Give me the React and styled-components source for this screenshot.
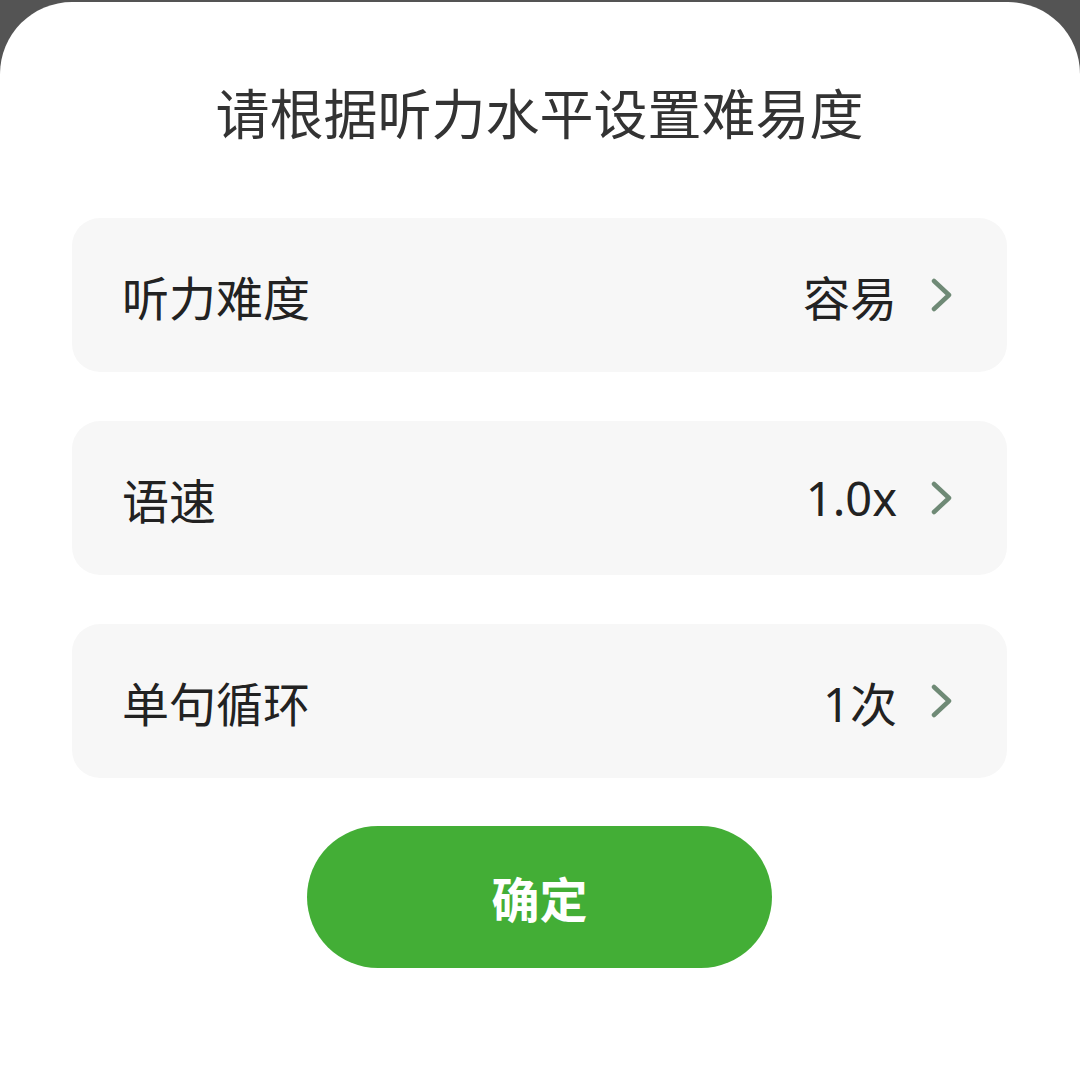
import React from "react";
import styled, { createGlobalStyle } from "styled-components";

const GlobalStyle = createGlobalStyle`
  html, body { margin: 0; padding: 0; background: #545454; }
  body { font-family: "Noto Sans", "Noto Sans CJK SC", sans-serif; }
  * { box-sizing: border-box; }
`;

const Page = styled.div`
  width: 1080px;
  height: 1075px;
  padding-top: 2px;
  background: #545454;
  overflow: hidden;
`;

const Sheet = styled.div`
  height: 1073px;
  background: #ffffff;
  border-radius: 72px 72px 0 0;
  padding: 80px 73px 0 72px;
  display: flex;
  flex-direction: column;
`;

const Title = styled.h1`
  margin: 0;
  font-family: "Noto Sans CJK SC", sans-serif;
  font-weight: 400;
  font-size: 54px;
  line-height: 60px;
  color: #333333;
  text-align: center;
`;

const List = styled.div`
  margin-top: 76px;
  display: flex;
  flex-direction: column;
  gap: 49px;
`;

const Row = styled.div`
  height: 154px;
  background: #f7f7f7;
  border-radius: 28px;
  display: flex;
  align-items: center;
  padding: 0 54px 0 50px;
`;

const Label = styled.span`
  flex: 1;
  font-family: "Noto Sans", "Noto Sans CJK SC", sans-serif;
  font-size: 47px;
  color: #222222;
`;

const Value = styled.span`
  font-family: "Noto Sans", "Noto Sans CJK SC", sans-serif;
  font-size: 47px;
  color: #222222;
  margin-right: 34px;
`;

const Chevron = () => (
  <svg width="22" height="34" viewBox="0 0 22 34" fill="none">
    <path
      d="M3 3 L18 17 L3 31"
      stroke="#6f8a76"
      strokeWidth="4.5"
      strokeLinecap="round"
      strokeLinejoin="round"
    />
  </svg>
);

const Confirm = styled.button`
  margin: 48px auto 0;
  width: 465px;
  height: 142px;
  border: none;
  border-radius: 71px;
  background: #43ae36;
  color: #ffffff;
  font-family: "Noto Sans CJK SC", sans-serif;
  font-weight: 700;
  font-size: 48px;
  letter-spacing: 0;
  cursor: pointer;
`;

const rows = [
  { label: "听力难度", value: "容易" },
  { label: "语速", value: "1.0x" },
  { label: "单句循环", value: "1次" },
];

export default function App() {
  return (
    <>
      <GlobalStyle />
      <Page>
        <Sheet>
          <Title>请根据听力水平设置难易度</Title>
          <List>
            {rows.map((r) => (
              <Row key={r.label}>
                <Label>{r.label}</Label>
                <Value>{r.value}</Value>
                <Chevron />
              </Row>
            ))}
          </List>
          <Confirm>确定</Confirm>
        </Sheet>
      </Page>
    </>
  );
}
